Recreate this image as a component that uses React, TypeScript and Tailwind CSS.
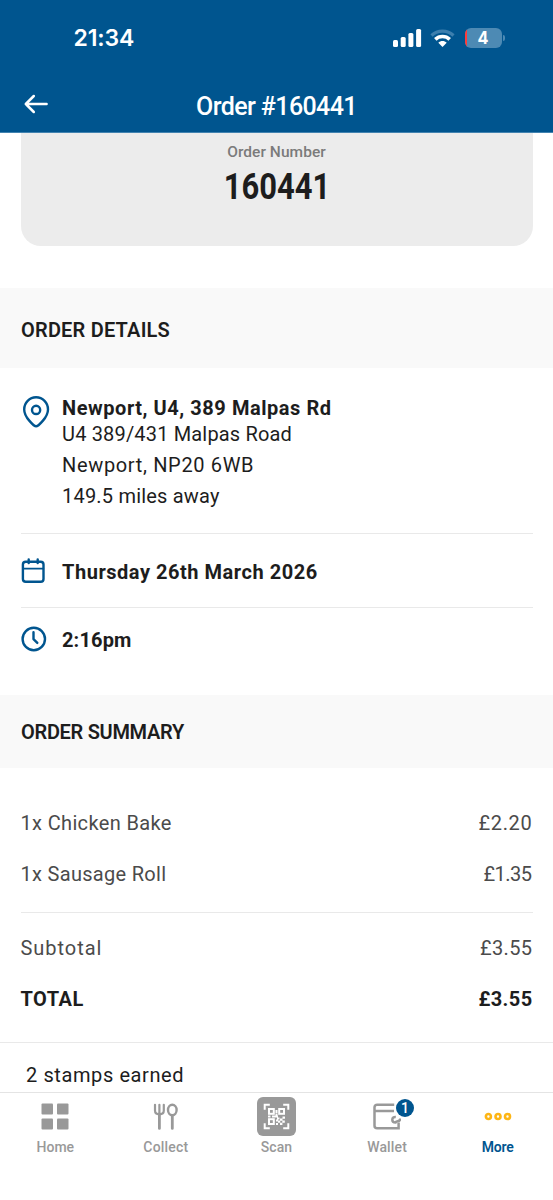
import { FC, ReactNode } from "react";
import clsx from "clsx";

const ORDER = {
  number: "160441",
  items: [
    {
      name: "1x Chicken Bake",
      price: "£2.20",
      nameClass: "tracking-[0.35px]",
      priceClass: "tracking-[0.7px]",
    },
    {
      name: "1x Sausage Roll",
      price: "£1.35",
      nameClass: "tracking-[0.3px]",
      priceClass: "mr-px tracking-[-0.5px]",
    },
  ],
};

const StatusBar: FC = () => (
  <div className="flex h-[76px] items-center justify-between pl-[73.5px] pr-[48px] font-['Inter',sans-serif]">
    <span className="text-[23px] leading-none font-semibold tracking-[-0.1px]">
      21:34
    </span>
    <div className="flex items-center">
      <svg width="29" height="18" viewBox="0 0 29 18" fill="currentColor">
        <rect x="0" y="11" width="5" height="7" rx="1.5" />
        <rect x="7.7" y="8" width="5" height="10" rx="1.5" />
        <rect x="15.4" y="4" width="5" height="14" rx="1.5" />
        <rect x="23.1" y="0" width="5" height="18" rx="1.5" />
      </svg>
      <svg className="ml-[8px]" width="25" height="18" viewBox="0 0 25 18">
        <path
          d="M1.5 6.5C7.5 0.7 17.5 0.7 23.5 6.5"
          fill="none"
          stroke="#3d7fae"
          strokeWidth="3.2"
        />
        <path
          d="M5.3 10.4C9.2 6.6 15.8 6.6 19.7 10.4"
          fill="none"
          stroke="#fff"
          strokeWidth="3.6"
        />
        <path d="M8.3 13.7C10.6 11.5 14.4 11.5 16.7 13.7L12.5 17.9Z" fill="#fff" />
      </svg>
      <div className="relative ml-[10px] flex h-[20px] w-[37px] items-center justify-center overflow-hidden rounded-[6px] bg-[#4d8ab4] text-[18px] leading-none font-bold">
        <i className="absolute inset-y-0 left-0 w-[1.5px] bg-[#ff3b3b]" />
        <span className="scale-x-90">4</span>
      </div>
      <div className="ml-px h-[6px] w-[2px] rounded-r-full bg-[#4d8ab4]" />
    </div>
  </div>
);

const Header: FC = () => (
  <header className="h-[133px] shrink-0 border-b border-[#4283b0] bg-[#00558f] text-white">
    <StatusBar />
    <div className="grid h-[56px] grid-cols-[1fr_auto_1fr] items-center pl-[24px]">
      <svg
        width="25"
        height="20"
        viewBox="0 0 25 20"
        fill="none"
        stroke="currentColor"
        strokeWidth="2.5"
        strokeLinecap="round"
        strokeLinejoin="round"
      >
        <path d="M9.8 2 1.8 10l8 8M1.8 10h20.8" />
      </svg>
      <h1 className="mt-[5px] mr-[24px] text-[25px] leading-none font-medium tracking-[-0.6px]">
        Order #{ORDER.number}
      </h1>
    </div>
  </header>
);

const SectionTitle: FC<{ className: string; children: ReactNode }> = ({
  className,
  children,
}) => (
  <h2
    className={clsx(
      "flex items-center bg-[#f9f9f9] px-[21px] text-[20px] font-semibold",
      className,
    )}
  >
    {children}
  </h2>
);

const OrderDetails: FC = () => (
  <section className="px-[20.5px]">
    <div className="flex h-[166px] border-b-[1.5px] border-[#e9e9e9] pt-[27px]">
      <svg
        className="mt-[1px] ml-[2px] shrink-0"
        width="27"
        height="32"
        viewBox="0 0 27 32"
        fill="none"
        stroke="#00558f"
        strokeWidth="2.4"
        strokeLinejoin="round"
      >
        <path d="M13.1 30.3C11.3 30.3 1.2 21.5 1.2 13.4C1.2 6.7 6.5 1.3 13.1 1.3S25 6.7 25 13.4C25 21.5 14.9 30.3 13.1 30.3Z" />
        <circle cx="13.1" cy="13.9" r="4.1" />
      </svg>
      <div className="ml-[12.5px] whitespace-nowrap text-[20px]">
        <p className="h-[24px] leading-[26px] font-bold tracking-[0.55px]">
          Newport, U4, 389 Malpas Rd
        </p>
        <p className="leading-[31px] tracking-[0.17px]">U4 389/431 Malpas Road</p>
        <p className="leading-[31px] tracking-[0.66px]">Newport, NP20 6WB</p>
        <p className="leading-[31px] tracking-[0.2px]">149.5 miles away</p>
      </div>
    </div>
    <div className="flex h-[73.5px] items-center border-b-[1.5px] border-[#e9e9e9]">
      <svg
        className="mt-[2px] ml-[0.5px] shrink-0"
        width="25"
        height="26"
        viewBox="0 0 25 26"
        fill="none"
        stroke="#00558f"
        strokeWidth="2.4"
        strokeLinecap="round"
      >
        <rect x="1.9" y="3.7" width="20.6" height="20" rx="2.8" />
        <path d="M2 10.6h20.3" strokeWidth="1.8" />
        <path d="M7.7 1.5v3.6M16.7 1.5v3.6" />
      </svg>
      <p className="ml-[16px] pt-[3px] text-[20px] font-bold tracking-[0.53px]">
        Thursday 26th March 2026
      </p>
    </div>
    <div className="flex h-[87.5px] pt-[18px]">
      <svg
        className="shrink-0"
        width="26"
        height="26"
        viewBox="0 0 26 26"
        fill="none"
        stroke="#00558f"
        strokeWidth="2.4"
        strokeLinecap="round"
        strokeLinejoin="round"
      >
        <circle cx="12.8" cy="13" r="11.2" />
        <path d="M12.5 6.3v6.8l3.8 3.8" />
      </svg>
      <p className="ml-[15.5px] text-[20px] leading-[28px] font-bold tracking-[0.15px]">
        2:16pm
      </p>
    </div>
  </section>
);

const OrderSummary: FC = () => (
  <section>
    <div className="px-[20.5px] text-[20px] text-[#4b4b4b]">
      <ul className="flex h-[144.5px] flex-col border-b-[1.5px] border-[#e9e9e9] pt-[29px]">
        {ORDER.items.map(({ name, price, nameClass, priceClass }) => (
          <li key={name} className="flex h-[51.5px] items-center justify-between">
            <span className={nameClass}>{name}</span>
            <span className={priceClass}>{price}</span>
          </li>
        ))}
      </ul>
      <div className="flex h-[129px] flex-col pt-[9.5px]">
        <div className="flex h-[51.5px] items-center justify-between">
          <span className="tracking-[0.95px]">Subtotal</span>
          <span className="tracking-[0.4px]">£3.55</span>
        </div>
        <div className="flex h-[51.5px] items-center justify-between font-bold text-[#1d1d1d]">
          <span className="tracking-[0.5px]">TOTAL</span>
          <span className="tracking-[0.4px]">£3.55</span>
        </div>
      </div>
    </div>
    <p className="border-t-[1.5px] border-[#e9e9e9] pt-[17px] pl-[26px] text-[20px] tracking-[0.6px]">
      2 stamps earned
    </p>
  </section>
);

const HomeIcon: FC = () => (
  <svg width="28" height="27" viewBox="0 0 28 27" fill="currentColor">
    <rect x="0.5" y="0.5" width="11.5" height="11" rx="1" />
    <rect x="16" y="0.5" width="11.5" height="11" rx="1" />
    <rect x="0.5" y="15.5" width="11.5" height="11" rx="1" />
    <rect x="16" y="15.5" width="11.5" height="11" rx="1" />
  </svg>
);

const CollectIcon: FC = () => (
  <svg
    width="25"
    height="27"
    viewBox="0 0 25 27"
    fill="none"
    stroke="currentColor"
    strokeWidth="2.2"
    strokeLinecap="round"
  >
    <path d="M2 1.8v5.8c0 2.4 1.8 3.8 4.4 3.8s4.4-1.4 4.4-3.8V1.8M6.4 1.8v9" />
    <path d="M6.4 11v14.4M19.3 13v12.4" strokeWidth="2.8" />
    <ellipse cx="19.3" cy="7" rx="4.3" ry="5.2" strokeWidth="2.4" />
  </svg>
);

const ScanIcon: FC = () => (
  <svg width="39" height="39" viewBox="0 0 39 39">
    <rect width="39" height="39" rx="6" fill="#999" />
    <g fill="none" stroke="#fff" strokeWidth="2">
      <path d="M7.7 12.8V7.7h5.1M26.2 7.7h5.1v5.1M31.3 26.2v5.1h-5.1M12.8 31.3H7.7v-5.1" />
      <rect x="12" y="12" width="4.8" height="4.8" />
      <rect x="22.2" y="12" width="4.8" height="4.8" />
      <rect x="12" y="22.2" width="4.8" height="4.8" />
    </g>
    <path
      d="M18.5 13h2v3h-2zM18.5 16.5h2v2h-2zM11 18.6h2.5v1.8H11zM15 18.6h6v2h-6zM20 20.4h2.5v2H20zM25.5 19.5h2.5v2.2h-2.5zM23 21.5h2.5v2.2H23zM19 22.5h2v2h-2zM21 23.6h2.2v2.2H21zM25.3 23.6h2.5v2.2h-2.5zM23 25.7h2.4v2.2H23zM19 26h2v2h-2z"
      fill="#fff"
    />
  </svg>
);

const WalletIcon: FC = () => (
  <div className="relative">
    <svg
      width="28"
      height="27"
      viewBox="0 0 28 27"
      fill="none"
      stroke="currentColor"
      strokeWidth="2.5"
    >
      <path d="M21.2 1.7H4.2C2.5 1.7 1.5 2.7 1.5 4.3V22.8C1.5 24.5 2.5 25.3 4.2 25.3H25.6V19.5" />
      <path d="M1.8 8H21" />
      <path d="M22.8 14c-2-.2-3.5.9-3.5 2.7s1.3 2.8 3.2 2.8c.8-2.2 4.8-.2 4.8-4" />
    </svg>
    <span className="absolute -top-[3.5px] left-[23px] flex size-[18px] items-center justify-center rounded-full bg-[#00558f] text-[14px] leading-none font-medium text-white ring-[0.5px] ring-white">
      1
    </span>
  </div>
);

const MoreIcon: FC = () => (
  <svg
    width="28"
    height="9"
    viewBox="0 0 28 9"
    fill="none"
    stroke="#fdb515"
    strokeWidth="2.6"
  >
    <circle cx="4.4" cy="4.5" r="2.5" />
    <circle cx="14" cy="4.5" r="2.5" />
    <circle cx="23.5" cy="4.5" r="2.5" />
  </svg>
);

const TABS = [
  { label: "Home", icon: <HomeIcon />, labelClass: "tracking-[0px]" },
  { label: "Collect", icon: <CollectIcon />, labelClass: "tracking-[0.2px]" },
  { label: "Scan", icon: <ScanIcon />, labelClass: "tracking-[0.1px]" },
  { label: "Wallet", icon: <WalletIcon />, labelClass: "tracking-[0.15px]" },
  {
    label: "More",
    icon: <MoreIcon />,
    labelClass: "font-semibold tracking-[-0.2px] text-[#00558f]",
  },
];

const TabBar: FC = () => (
  <nav className="grid h-[108px] shrink-0 grid-cols-5 border-t border-[#e4e4e4] bg-white text-[#999]">
    {TABS.map(({ label, icon, labelClass }) => (
      <a key={label} className="flex flex-col items-center">
        <span className="flex h-[46px] items-center justify-center">{icon}</span>
        <span className={clsx("text-[14px] leading-[16px] font-medium", labelClass)}>
          {label}
        </span>
      </a>
    ))}
  </nav>
);

const App: FC = () => (
  <div className="flex h-[1200px] w-[553px] flex-col overflow-hidden bg-white font-['Roboto',sans-serif] text-[#1d1d1d]">
    <Header />
    <main className="min-h-0 flex-1 overflow-hidden">
      <div className="mx-[20.5px] h-[113px] rounded-b-[20px] bg-[#ececec] pt-[9px] text-center">
        <p className="text-[15.5px] leading-[21px] font-medium tracking-[0.05px] text-[#7b7b7b]">
          Order Number
        </p>
        <p className="mt-[5px] scale-x-[0.86] text-[36px] leading-[38px] font-bold">
          {ORDER.number}
        </p>
      </div>
      <SectionTitle className="mt-[42px] h-[80px] pt-[3px] tracking-[0.2px]">
        ORDER DETAILS
      </SectionTitle>
      <OrderDetails />
      <SectionTitle className="h-[73px] pt-[1px] tracking-[-0.3px]">
        ORDER SUMMARY
      </SectionTitle>
      <OrderSummary />
    </main>
    <TabBar />
  </div>
);

export default App;
